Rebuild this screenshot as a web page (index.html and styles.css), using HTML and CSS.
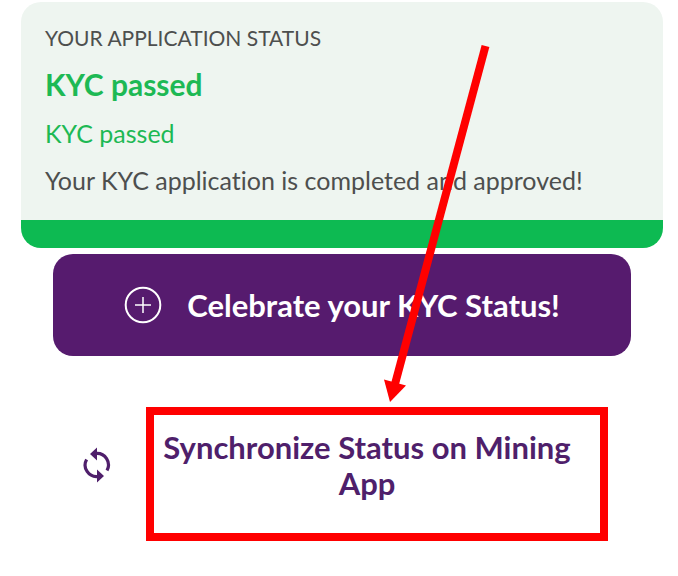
FILE: index.html
```html
<!DOCTYPE html>
<html lang="en">
<head>
    <meta charset="UTF-8">
    <meta name="viewport" content="width=device-width, initial-scale=1.0">
    <title>KYC Status</title>
    <link rel="stylesheet" href="styles.css">
</head>
<body>
    <main class="page">
        <section class="status-card">
            <h1 class="status-label">YOUR APPLICATION STATUS</h1>
            <p class="status-title">KYC passed</p>
            <p class="status-subtitle">KYC passed</p>
            <p class="status-text">Your KYC application is completed and approved!</p>
        </section>

        <div class="actions">
            <button type="button" class="btn btn-celebrate">
                <svg class="icon-plus" viewBox="0 0 38 38" aria-hidden="true">
                    <circle cx="19" cy="19" r="17.3" fill="none" stroke="currentColor" stroke-width="2"/>
                    <path d="M19 11v16M11 19h16" fill="none" stroke="currentColor" stroke-width="1.5"/>
                </svg>
                <span>Celebrate your KYC Status!</span>
            </button>

            <button type="button" class="btn btn-sync">
                <svg class="icon-sync" viewBox="0 0 28 36" aria-hidden="true">
                    <path d="M13 6.5A11.5 11.5 0 0 1 24 23.5M3.6 12.5A11.5 11.5 0 0 0 15 29.5" fill="none" stroke="currentColor" stroke-width="3.2"/>
                    <path d="M7 7L14 .5V13.500zM21 29L14 22.500V35.500z" fill="currentColor"/>
                </svg>
                <span class="sync-label">Synchronize Status on Mining App</span>
            </button>
        </div>

        <!-- arrow pointing at the sync button -->
        <svg class="arrow" viewBox="0 0 110 360" aria-hidden="true">
            <path d="M102.500 3L12 341" stroke="#f00" stroke-width="8"/>
            <path d="M1 336.500L23 342.500L7 359z" fill="#f00"/>
        </svg>
    </main>
</body>
</html>
```

FILE: styles.css
```css
body {
    margin: 0;
    background-color: #fff;
    font-family: Lato, "Liberation Sans", sans-serif;
    font-variant-ligatures: none;
    color: #4d4f4e;
}

.page {
    position: relative;
    padding: 2px 15px 32px 21px;
}

.status-card {
    padding: 22px 24px;
    background-color: #eef5f0;
    border-bottom: 28px solid #0dba52;
    border-radius: 20px;
}

.status-label,
.status-title,
.status-subtitle,
.status-text {
    margin: 0;
}

.status-label {
    margin-bottom: 12px;
    font-size: 21px;
    font-weight: 400;
    line-height: 28px;
}

.status-title {
    margin-bottom: 12px;
    color: #1db954;
    font-size: 30px;
    font-weight: 700;
    line-height: 40px;
}

.status-subtitle {
    margin-bottom: 12px;
    color: #1db954;
    font-size: 25px;
    line-height: 35px;
}

.status-text {
    font-size: 25px;
    line-height: 35px;
}

.actions {
    margin: 6px 32px 0;
}

.btn {
    display: flex;
    align-items: center;
    width: 100%;
    border: none;
    font-family: inherit;
    font-size: 31px;
    font-weight: 700;
    line-height: 36px;
    cursor: pointer;
}

.btn-celebrate {
    justify-content: center;
    gap: 25px;
    padding: 32px 0;
    background-color: #561b6e;
    border-radius: 20px;
    color: #fff;
}

.icon-plus {
    width: 38px;
    height: 38px;
}

.btn-sync {
    gap: 35px;
    margin-top: 51px;
    padding: 0 23px 0 30px;
    background: none;
    color: #4f1f6b;
}

.icon-sync {
    flex: none;
    width: 28px;
    height: 36px;
    margin-top: -18px;
}

.sync-label {
    flex: 1;
    padding: 14px 24px 32px 4px;
    border: 8px solid #f00;
    text-align: center;
}

.arrow {
    position: absolute;
    top: 43px;
    left: 383px;
    width: 110px;
    height: 360px;
    pointer-events: none;
}
```
